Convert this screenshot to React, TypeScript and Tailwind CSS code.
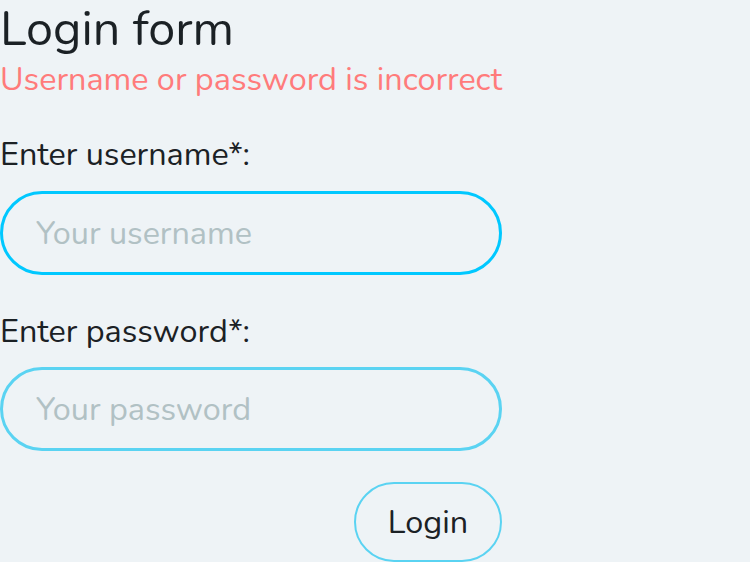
import React, { useState } from 'react';

export default function App() {
  const [username, setUsername] = useState('');
  const [password, setPassword] = useState('');

  return (
    <div className="min-h-[562px] w-full bg-[#eef3f6] font-['Nunito','Lato',sans-serif] text-[#1b2125]">
      <form className="flex w-[502px] flex-col" onSubmit={(e) => e.preventDefault()}>
        <h1 className="text-[48.5px] leading-[58px] font-normal">Login form</h1>
        <p className="text-[32.4px] leading-[42px] text-[#ff7b7b]">Username or password is incorrect</p>

        <label className="mt-[34px] text-[32.4px] leading-[40px]" htmlFor="username">
          Enter username*:
        </label>
        <input
          id="username"
          value={username}
          onChange={(e) => setUsername(e.target.value)}
          placeholder="Your username"
          className="mt-[17px] h-[84px] w-full rounded-full border-[3px] border-[#00c8ff] bg-transparent px-[33px] text-[32.4px] outline-none placeholder:text-[#b1c1c4]"
        />

        <label className="mt-[36px] text-[32.4px] leading-[40px]" htmlFor="password">
          Enter password*:
        </label>
        <input
          id="password"
          type="password"
          value={password}
          onChange={(e) => setPassword(e.target.value)}
          placeholder="Your password"
          className="mt-[16px] h-[84px] w-full rounded-full border-[3px] border-[#5ad3f2] bg-transparent px-[33px] text-[32.4px] outline-none placeholder:text-[#b1c1c4]"
        />

        <div className="mt-[31px] flex justify-end">
          <button
            type="submit"
            className="h-[80px] w-[148px] rounded-full border-2 border-[#5ad3f2] text-[32.4px] text-[#1b2125]"
          >
            Login
          </button>
        </div>
      </form>
    </div>
  );
}
